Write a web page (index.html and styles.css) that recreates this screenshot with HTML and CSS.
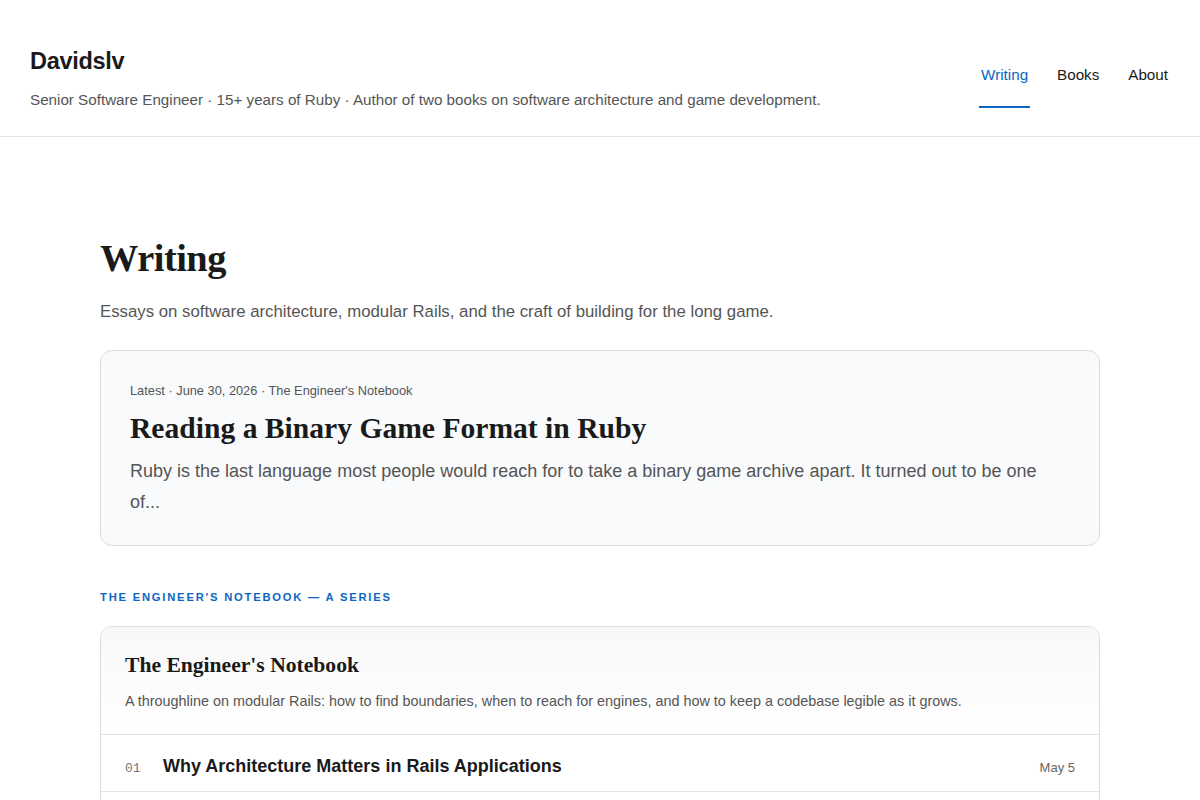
FILE: index.html
```html
<!DOCTYPE html>
<html lang="en">
<head>
    <meta charset="UTF-8">
    <meta name="viewport" content="width=device-width, initial-scale=1.0">
    <title>Writing · Davidslv</title>
    <link rel="stylesheet" href="styles.css">
</head>
<body>
    <header class="site-header">
        <div class="brand">
            <a class="brand-name" href="#">Davidslv</a>
            <p class="tagline">Senior Software Engineer · 15+ years of Ruby · Author of two books on software architecture and game development.</p>
        </div>
        <nav class="site-nav">
            <a href="#" class="nav-link active">Writing</a>
            <a href="#" class="nav-link">Books</a>
            <a href="#" class="nav-link">About</a>
        </nav>
    </header>

    <main class="content">
        <h1 class="page-title">Writing</h1>
        <p class="page-intro">Essays on software architecture, modular Rails, and the craft of building for the long game.</p>

        <article class="featured">
            <div class="featured-meta">Latest · June 30, 2026 · The Engineer's Notebook</div>
            <h2 class="featured-title">Reading a Binary Game Format in Ruby</h2>
            <p class="featured-excerpt">Ruby is the last language most people would reach for to take a binary game archive apart. It turned out to be one of...</p>
        </article>

        <h3 class="section-label">The Engineer's Notebook — A Series</h3>

        <section class="series">
            <div class="series-head">
                <h2 class="series-title">The Engineer's Notebook</h2>
                <p class="series-desc">A throughline on modular Rails: how to find boundaries, when to reach for engines, and how to keep a codebase legible as it grows.</p>
            </div>
            <ol class="series-list">
                <li class="series-item">
                    <span class="item-num">01</span>
                    <a href="#" class="item-title">Why Architecture Matters in Rails Applications</a>
                    <span class="item-date">May 5</span>
                </li>
                <li class="series-item">
                    <span class="item-num">02</span>
                    <a href="#" class="item-title">Finding the Boundaries in a Monolith</a>
                    <span class="item-date">May 19</span>
                </li>
            </ol>
        </section>
    </main>
</body>
</html>
```

FILE: styles.css
```css
body {
    margin: 0;
    background-color: #fff;
    color: #1a1a1a;
    font-family: "Liberation Sans", Arial, sans-serif;
}

a {
    color: inherit;
    text-decoration: none;
}

.site-header {
    display: flex;
    align-items: center;
    justify-content: space-between;
    padding: 47px 30px 27px;
    border-bottom: 1px solid #e2e2e2;
}

.brand-name {
    display: block;
    font-size: 23.5px;
    line-height: 29px;
    font-weight: bold;
    letter-spacing: -0.3px;
    color: #1a1a1a;
}

.tagline {
    margin: 15px 0 0;
    font-size: 15.2px;
    line-height: 18px;
    color: #555;
}

.site-nav {
    display: flex;
    gap: 25px;
}

.nav-link {
    padding: 18px 2px 23px;
    font-size: 15.2px;
    line-height: 17px;
    color: #1a1a1a;
    border-bottom: 2px solid transparent;
}

.nav-link.active {
    color: #0a66c2;
    border-bottom-color: #0a66c2;
}

.content {
    width: 1000px;
    margin: 0 auto;
    padding: 98px 0 40px;
}

.page-title {
    margin: 0 0 18px;
    font-family: "Liberation Serif", "Times New Roman", serif;
    font-size: 38.4px;
    line-height: 46px;
    letter-spacing: -0.5px;
}

.page-intro {
    margin: 0 0 25px;
    font-size: 16.8px;
    line-height: 26px;
    color: #555;
}

.featured {
    padding: 32px 29px 27px;
    background-color: #f9fafb;
    border: 1px solid #dedede;
    border-radius: 12px;
}

.featured-meta {
    font-size: 12.8px;
    line-height: 16px;
    color: #555;
}

.featured-title {
    margin: 11px 0 10px;
    font-family: "Liberation Serif", "Times New Roman", serif;
    font-size: 29.6px;
    line-height: 36px;
}

.featured-excerpt {
    margin: 0;
    font-size: 18px;
    line-height: 31px;
    color: #555;
}

.section-label {
    margin: 44px 0 22px;
    font-size: 11.2px;
    line-height: 14px;
    font-weight: bold;
    letter-spacing: 1.8px;
    text-transform: uppercase;
    color: #0a66c2;
}

.series {
    border: 1px solid #dedede;
    border-radius: 12px;
    overflow: hidden;
}

.series-head {
    padding: 25px 24px 22px;
    background: linear-gradient(#f8f8f8, #fff);
    border-bottom: 1px solid #e2e2e2;
}

.series-title {
    margin: 0 0 12px;
    font-family: "Liberation Serif", "Times New Roman", serif;
    font-size: 21.6px;
    line-height: 26px;
}

.series-desc {
    margin: 0;
    font-size: 14.4px;
    line-height: 22px;
    color: #555;
}

.series-list {
    list-style: none;
    margin: 0;
    padding: 0;
}

.series-item {
    display: flex;
    align-items: center;
    padding: 21px 24px 14px;
    border-bottom: 1px solid #e2e2e2;
}

.item-num {
    width: 38px;
    padding-top: 3px;
    font-family: "Liberation Mono", "Courier New", monospace;
    font-size: 13px;
    color: #777;
}

.item-title {
    flex: 1;
    font-size: 18px;
    line-height: 21px;
    font-weight: bold;
    color: #1a1a1a;
}

.item-date {
    padding-top: 2px;
    font-size: 13px;
    color: #666;
}
```
